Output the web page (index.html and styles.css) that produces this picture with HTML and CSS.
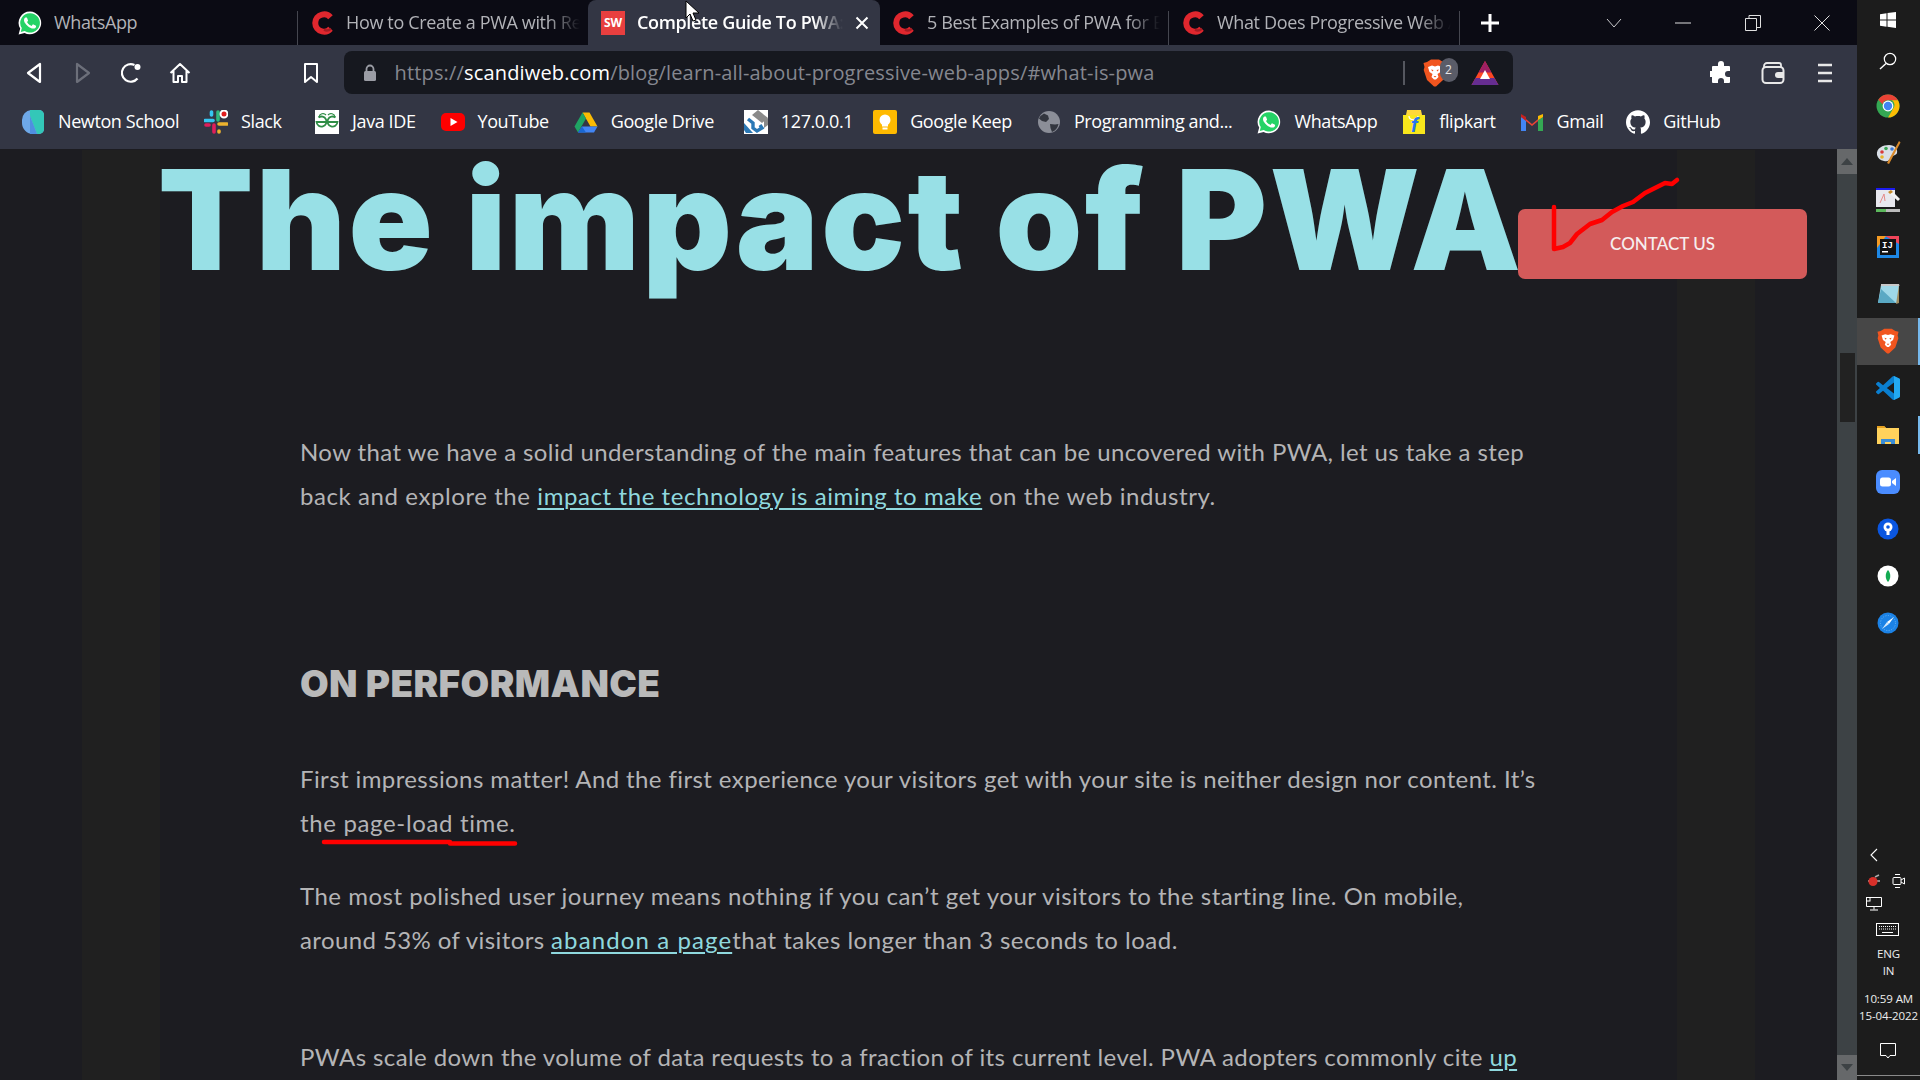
FILE: index.html
```html
<!DOCTYPE html>
<html lang="en">
<head>
<meta charset="utf-8">
<title>Complete Guide To PWA</title>
<link rel="stylesheet" href="styles.css">
</head>
<body>
<svg class="defs" width="0" height="0">
  <symbol id="wa" viewBox="0 0 24 24"><path fill="#fff" d="M12 .6A11.3 11.3 0 0 0 2.2 17.6L.6 23.4l6-1.5A11.3 11.3 0 1 0 12 .6z"/><path fill="#25d366" d="M12 2.2a9.7 9.7 0 0 0-8.2 14.9l-1 3.8 3.9-1A9.7 9.7 0 1 0 12 2.2z"/><path fill="#fff" d="M17.472 14.382c-.297-.149-1.758-.867-2.03-.967-.273-.099-.471-.148-.67.15-.197.297-.767.966-.94 1.164-.173.199-.347.223-.644.075-.297-.15-1.255-.463-2.39-1.475-.883-.788-1.48-1.761-1.653-2.059-.173-.297-.018-.458.13-.606.134-.133.298-.347.446-.52.149-.174.198-.298.298-.497.099-.198.05-.371-.025-.52-.075-.149-.669-1.612-.916-2.207-.242-.579-.487-.5-.669-.51-.173-.008-.371-.01-.57-.01-.198 0-.52.074-.792.372-.272.297-1.04 1.016-1.04 2.479 0 1.462 1.065 2.875 1.213 3.074.149.198 2.096 3.2 5.077 4.487.709.306 1.262.489 1.694.625.712.227 1.36.195 1.871.118.571-.085 1.758-.719 2.006-1.413.248-.694.248-1.289.173-1.413-.074-.124-.272-.198-.57-.347z"/></symbol>
  <symbol id="clogo" viewBox="0 0 24 24"><path fill="none" stroke="#e0272e" stroke-width="6" d="M20.5 6.2A8.4 8.4 0 0 0 12 3.6a8.6 8.6 0 0 0 0 16.8 8.4 8.4 0 0 0 8.5-2.6"/><path fill="none" stroke="#a51c24" stroke-width="2.4" d="M21 17.6a6 6 0 0 1-7 1.2"/></symbol>
  <symbol id="chrome" viewBox="0 0 24 24"><circle cx="12" cy="12" r="11.5" fill="#34a853"/><path fill="#ea4335" d="M12 .5a11.5 11.5 0 0 1 10 5.8H12a5.7 5.7 0 0 0-5.5 4L2.3 5.800A11.500 11.500 0 0 1 12 .5z"/><path fill="#fbbc04" d="M22 6.300a11.500 11.500 0 0 1-9.900 17.200l4.800-8.500a5.700 5.700 0 0 0-.900-8.700z"/><circle cx="12" cy="12" r="5.400" fill="#fff"/><circle cx="12" cy="12" r="4.200" fill="#4285f4"/></symbol>
  <symbol id="brave" viewBox="0 0 24 28"><path d="M4 3l4-2.500h8L20 3l3.500 1-1 4 .8 3-3.300 10-7 6.500h-2L4 21 .7 11l.8-3-1-4z" fill="#f1551f"/><path d="M5 8l4-1.500 3 1 3-1L19 8l-1.500 5-3 2 1 3-2.500 2.500h-2L8.500 18l1-3-3-2z" fill="#fff"/><path d="M8 10.500l2.500.5-1 1.500zM16 10.500l-2.500.5 1 1.500zM10.500 17h3l-1.500 1.500z" fill="#f1551f"/></symbol>
</svg>
<div class="desktop">
  <div class="browser">
    <div class="tabstrip">
      <div class="tab tab-wa"><svg width="24" height="24"><use href="#wa"/></svg><span class="tab-title">WhatsApp</span></div>
      <i class="sep"></i>
      <div class="tab tab-b"><svg width="24" height="24"><use href="#clogo"/></svg><span class="tab-title fade">How to Create a PWA with React</span></div>
      <div class="tab tab-active"><span class="sw">SW</span><span class="tab-title fade">Complete Guide To PWA: What</span><svg class="tab-x" width="14" height="14" viewBox="0 0 14 14"><path d="M1.500 1.500l11 11M12.500 1.500l-11 11" stroke="#fff" stroke-width="2"/></svg></div>
      <div class="tab tab-c"><svg width="24" height="24"><use href="#clogo"/></svg><span class="tab-title fade">5 Best Examples of PWA for E-commerce</span></div>
      <i class="sep"></i>
      <div class="tab tab-d"><svg width="24" height="24"><use href="#clogo"/></svg><span class="tab-title fade">What Does Progressive Web App</span></div>
      <i class="sep"></i>
      <div class="newtab"><svg width="20" height="20" viewBox="0 0 20 20"><path d="M10 1v18M1 10h18" stroke="#fff" stroke-width="3"/></svg></div>
      <div class="winctl winctl-first"><svg width="16" height="10" viewBox="0 0 16 10"><path d="M1 1l7 8 7-8" fill="none" stroke="#c9c9cc" stroke-width="1"/></svg></div>
      <div class="winctl"><svg width="16" height="2" viewBox="0 0 16 2"><path d="M0 1h16" stroke="#e0e0e0" stroke-width="1"/></svg></div>
      <div class="winctl"><svg width="16" height="16" viewBox="0 0 16 16"><path d="M.5 3.500h11v12H.5zM4 3.500V.5h11.500v12h-4" fill="none" stroke="#e0e0e0" stroke-width="1"/></svg></div>
      <div class="winctl"><svg width="16" height="16" viewBox="0 0 16 16"><path d="M.5.5l15 15M15.500.5l-15 15" stroke="#e0e0e0" stroke-width="1"/></svg></div>
    </div>
    <div class="toolbar">
      <div class="navbtn"><svg width="18" height="22" viewBox="0 0 18 22"><path d="M15 2v18L3 11z" fill="none" stroke="#fff" stroke-width="2.200" stroke-linejoin="round"/></svg></div>
      <div class="navbtn"><svg width="18" height="22" viewBox="0 0 18 22"><path d="M3 2v18l12-9z" fill="none" stroke="#6c6f7a" stroke-width="2.200" stroke-linejoin="round"/></svg></div>
      <div class="navbtn"><svg width="22" height="22" viewBox="0 0 22 22"><path d="M17.500 16.500A8.800 8.800 0 1 1 14.500 3" fill="none" stroke="#fff" stroke-width="2.200"/><circle cx="17.500" cy="5" r="3" fill="#fff"/></svg></div>
      <div class="navbtn"><svg width="22" height="22" viewBox="0 0 22 22"><path d="M1.500 11L11 2l9.500 9M4.500 9v11h4.500v-6h4v6h4.500V9" fill="none" stroke="#fff" stroke-width="2" stroke-linejoin="round"/></svg></div>
      <div class="navbtn navbtn-mark"><svg width="16" height="22" viewBox="0 0 16 22"><path d="M2 2h12v18l-6-5-6 5z" fill="none" stroke="#fff" stroke-width="2" stroke-linejoin="round"/></svg></div>
      <div class="omnibox">
        <svg class="lock" width="14" height="18" viewBox="0 0 14 18"><path d="M3.500 8V5a3.500 3.500 0 0 1 7 0v3" fill="none" stroke="#9b9da5" stroke-width="1.800"/><rect x="1" y="7" width="12" height="10" rx="1.500" fill="#9b9da5"/></svg>
        <span class="url"><span class="url-dim">https://</span><span class="url-host">scandiweb.com</span><span class="url-dim">/blog/learn-all-about-progressive-web-apps/#what-is-pwa</span></span>
        <i class="omni-div"></i>
        <div class="shield">
          <svg width="24" height="28"><use href="#brave"/></svg>
          <span class="shield-badge">2</span>
        </div>
        <svg class="bat" width="28" height="26" viewBox="0 0 28 26"><path d="M14 1L.5 25h27z" fill="#ff4724"/><path d="M14 1L7.500 12.500h13z" fill="#9e1f63"/><path d="M.5 25l4-7h19l4 7z" fill="#662d91"/><path d="M14 10l-5 9h10z" fill="#fff"/></svg>
      </div>
      <div class="toolbtn toolbtn-first"><svg width="22" height="24" viewBox="0 0 22 24"><path d="M8 3a3 3 0 0 1 6 0v2h5a1 1 0 0 1 1 1v4h-2a3 3 0 0 0 0 6h2v5a1 1 0 0 1-1 1h-5v-2a3 3 0 0 0-6 0v2H3a1 1 0 0 1-1-1v-5H.5a3 3 0 0 1 0-6H2V6a1 1 0 0 1 1-1h5z" fill="#fff"/></svg></div>
      <div class="toolbtn"><svg width="24" height="24" viewBox="0 0 24 24"><path d="M3 7V5a3 3 0 0 1 3-3h12a2 2 0 0 1 2 2v3" fill="none" stroke="#e8e8e8" stroke-width="1.800"/><rect x="1.500" y="6" width="21" height="16" rx="3.500" fill="none" stroke="#e8e8e8" stroke-width="2"/><path d="M23 11h-6a2.800 2.800 0 0 0 0 6h6z" fill="#e8e8e8"/></svg></div>
      <div class="toolbtn"><svg width="20" height="22" viewBox="0 0 20 22"><path d="M3 3h14M3 11h14M3 19h14" stroke="#e8e8e8" stroke-width="2.400"/></svg></div>
    </div>
    <div class="bookmarks">
      <div class="bm bm-1"><svg width="24" height="24" viewBox="0 0 24 24"><path d="M10 0h8a5 5 0 0 1 5 5v14a5 5 0 0 1-5 5h-6A11 11 0 0 1 1 13v-3A10 10 0 0 1 10 0z" fill="#6ea8e8"/><path d="M9 0h9a5 5 0 0 1 5 5v14a5 5 0 0 1-5 5h-2L9 6z" fill="#33c7b8"/><path d="M9 24V6l7 18z" fill="#4f8fe0"/></svg><span>Newton School</span></div>
      <div class="bm bm-2"><svg width="24" height="24" viewBox="0 0 24 24"><path d="M1 10.500h8" stroke="#36c5f0" stroke-width="3.600" stroke-linecap="round"/><path d="M7.500 2v3" stroke="#36c5f0" stroke-width="3.600" stroke-linecap="round"/><path d="M14 2v8" stroke="#2eb67d" stroke-width="3.600" stroke-linecap="round"/><path d="M15 14h8" stroke="#ecb22e" stroke-width="3.600" stroke-linecap="round"/><path d="M15 21v1" stroke="#ecb22e" stroke-width="3.600" stroke-linecap="round"/><path d="M10 15v7" stroke="#e01e5a" stroke-width="3.600" stroke-linecap="round"/><path d="M2 15h3" stroke="#e01e5a" stroke-width="3.600" stroke-linecap="round"/><circle cx="20" cy="4" r="3.500" fill="#e01e1e" stroke="#fff" stroke-width="2"/></svg><span>Slack</span></div>
      <div class="bm bm-3"><svg width="24" height="24" viewBox="0 0 24 24"><rect width="24" height="24" fill="#fff"/><path d="M11.500 12H1.500a5 5 0 1 0 2-4.500M12.500 12h10a5 5 0 1 1-2-4.500" fill="none" stroke="#2f8d46" stroke-width="1.800"/><path d="M11 5a4 4 0 0 0-7 2M13 5a4 4 0 0 1 7 2" fill="none" stroke="#2f8d46" stroke-width="1.200"/></svg><span>Java IDE</span></div>
      <div class="bm bm-4"><svg width="24" height="24" viewBox="0 0 24 24"><rect y="3" width="24" height="18" rx="5" fill="#f00"/><path d="M9.500 8v8l7-4z" fill="#fff"/></svg><span>YouTube</span></div>
      <div class="bm bm-5"><svg width="24" height="24" viewBox="0 0 24 24"><path d="M8.500 2.500h7l8 14h-7z" fill="#fbbc04"/><path d="M8.500 2.500L.5 16.500l3.500 6 8-14z" fill="#1fa463"/><path d="M4 22.500h16l3.500-6h-15.500z" fill="#4285f4"/><path d="M8 16.500L4 22.500h8z" fill="#1967d2"/></svg><span>Google Drive</span></div>
      <div class="bm bm-6"><svg width="24" height="24" viewBox="0 0 24 24"><rect width="24" height="24" fill="#fff"/><path d="M14 0l10 8-6 5-10-8z" fill="#8a8a8a"/><path d="M4 9l5 4v5l4 3 5-3-2-3" fill="none" stroke="#2b78b5" stroke-width="3.400"/><path d="M0 13l9 10H2l-2-3z" fill="#2b78b5"/><path d="M20 10l4-2v7l-4 3z" fill="#8a8a8a"/></svg><span>127.0.0.1</span></div>
      <div class="bm bm-7"><svg width="24" height="24" viewBox="0 0 24 24"><rect width="24" height="24" rx="2" fill="#ffba00"/><circle cx="12" cy="10" r="5.500" fill="#fff"/><rect x="9" y="14" width="6" height="2.500" fill="#fff"/><rect x="9.500" y="17.500" width="5" height="2" fill="#fff"/></svg><span>Google Keep</span></div>
      <div class="bm bm-8"><svg width="24" height="24" viewBox="0 0 24 24"><circle cx="12" cy="12" r="11" fill="#8b8e98"/><path d="M7 3.500l4 2 1 3.500-3 3-4-1-3-2.500A11 11 0 0 1 7 3.500zM13 14l5 .5 3.500-.5a11 11 0 0 1-6.500 8l-1.500-4z" fill="#33363f"/></svg><span>Programming and...</span></div>
      <div class="bm bm-9"><svg width="24" height="24"><use href="#wa"/></svg><span>WhatsApp</span></div>
      <div class="bm bm-10"><svg width="24" height="24" viewBox="0 0 24 24"><path d="M1 5h22v19H1z" fill="#f8e71c"/><path d="M4 5L5 0h14l1 5z" fill="#ffd83a"/><path d="M7 6c0 5 9 5 9 0" fill="none" stroke="#fff" stroke-width="1.200"/><text class="flip-f" x="9" y="22">f</text></svg><span>flipkart</span></div>
      <div class="bm bm-11"><svg width="24" height="24" viewBox="0 0 24 24"><path d="M1 5l11 9 11-9v2L12 16 1 7z" fill="#ea4335"/><path d="M1 7v14h5V10z" fill="#4285f4"/><path d="M23 7v14h-5V10z" fill="#34a853"/><path d="M18 10l5-3V4l-5 2z" fill="#fbbc04"/><path d="M1 4l5 3v4L1 7z" fill="#c5221f"/></svg><span>Gmail</span></div>
      <div class="bm bm-12"><svg width="24" height="24" viewBox="0 0 24 24"><path fill="#fff" d="M12 .297c-6.630 0-12 5.373-12 12 0 5.303 3.438 9.800 8.205 11.385.6.113.82-.258.82-.577 0-.285-.01-1.040-.015-2.040-3.338.724-4.042-1.610-4.042-1.610C4.422 18.070 3.633 17.700 3.633 17.700c-1.087-.744.084-.729.084-.729 1.205.084 1.838 1.236 1.838 1.236 1.070 1.835 2.809 1.305 3.495.998.108-.776.417-1.305.76-1.605-2.665-.3-5.466-1.332-5.466-5.930 0-1.310.465-2.380 1.235-3.220-.135-.303-.54-1.523.105-3.176 0 0 1.005-.322 3.300 1.230.96-.267 1.980-.399 3-.405 1.020.006 2.040.138 3 .405 2.280-1.552 3.285-1.230 3.285-1.230.645 1.653.24 2.873.12 3.176.765.84 1.230 1.910 1.230 3.220 0 4.610-2.805 5.625-5.475 5.920.42.36.81 1.096.81 2.220 0 1.606-.015 2.896-.015 3.286 0 .315.21.69.825.57C20.565 22.092 24 17.592 24 12.297c0-6.627-5.373-12-12-12"/></svg><span>GitHub</span></div>
    </div>
    <div class="viewport">
      <div class="page">
        <div class="band">
          <article class="article">
            <h1 class="hero">The impact of PWA</h1>
            <p class="copy copy-first">Now that we have a solid understanding of the main features that can be uncovered with PWA, let us take a step<br><span class="ls-a">back and explore the <a class="lnk">impact the technology is aiming to make</a> on the web industry.</span></p>
            <h2 class="sub">ON PERFORMANCE</h2>
            <p class="copy copy-a">First impressions matter! And the first experience your visitors get with your site is neither design nor content. It’s<br><span class="ls-b">the page-load time.</span></p>
            <p class="copy copy-b"><span class="ls-c">The most polished user journey means nothing if you can’t get your visitors to the starting line. On mobile,</span><br>around 53% of visitors <a class="lnk lnk-wide">abandon a page</a><span class="ls-c">that takes longer than 3 seconds to load.</span></p>
            <p class="copy copy-c">PWAs scale down the volume of data requests to a fraction of its current level. PWA adopters commonly cite <a class="lnk">up</a></p>
          </article>
        </div>
        <a class="contact">CONTACT US</a>
      </div>
      <div class="scrollbar">
        <div class="sb-btn"><i class="arrow-up"></i></div>
        <div class="sb-track"><div class="sb-thumb"></div></div>
        <div class="sb-btn"><i class="arrow-down"></i></div>
      </div>
    </div>
  </div>
  <aside class="taskbar">
    <div class="tb-icon tb-win"><svg width="16" height="16" viewBox="0 0 16 16"><path d="M0 2.300l6.500-1v6.200H0zM7.500 1.100L16 0v7.500H7.500zM0 8.500h6.500v6.200l-6.500-1zM7.500 8.500H16V16l-8.500-1.200z" fill="#fff"/></svg></div>
    <div class="tb-icon tb-search"><svg width="18" height="18" viewBox="0 0 18 18"><circle cx="11" cy="7" r="5.700" fill="none" stroke="#fff" stroke-width="1.200"/><path d="M7 11.500L1 17" stroke="#fff" stroke-width="1.400"/></svg></div>
    <div class="tb-icon"><svg width="24" height="24"><use href="#chrome"/></svg></div>
    <div class="tb-icon"><svg width="26" height="26" viewBox="0 0 26 26"><path d="M2 15C1 8 8 5 14 5c6 0 9 4 8 8-1 3-5 2-6 4-1 3-3 5-7 4-4-.5-6-3-7-6z" fill="#d9dfe6"/><circle cx="7" cy="12" r="1.800" fill="#d83b3b"/><circle cx="11" cy="8.500" r="1.800" fill="#3aa655"/><circle cx="17" cy="9" r="1.800" fill="#3b79d8"/><circle cx="7" cy="17" r="1.800" fill="#e8b32c"/><path d="M24 1l1.500 1.500L14 24l-2-1z" fill="#d98a2b"/></svg></div>
    <div class="tb-icon"><svg width="26" height="26" viewBox="0 0 26 26"><rect x="1" y="1" width="19" height="2" fill="#1c1cf0"/><rect x="1" y="3" width="19" height="17" fill="#e8e8ee"/><path d="M5 16l4-9 1 7" fill="none" stroke="#e58a8a" stroke-width="1"/><path d="M13 5l3-2 9 9-2 2z" fill="#f4f4f4"/><path d="M13 5l3-2 2 2-3 2z" fill="#c58a2a"/><rect x="1" y="22" width="10" height="3" fill="#5cb85c"/><rect x="11" y="22" width="14" height="3" fill="#bbb"/></svg></div>
    <div class="tb-icon"><svg width="22" height="22" viewBox="0 0 22 22"><rect width="22" height="22" fill="#1e88e5"/><path d="M0 0h22v8L8 0z" fill="#f0455a"/><path d="M0 0h9L0 12z" fill="#f59b23"/><rect x="3" y="3" width="16" height="16" fill="#111"/><rect x="5" y="15" width="6" height="1.500" fill="#fff"/><text class="ij" x="5" y="12">IJ</text></svg></div>
    <div class="tb-icon"><svg width="24" height="24" viewBox="0 0 24 24"><path d="M5 3h18v18H2z" fill="#9fd8e8"/><path d="M2 21L5 7l15 14z" fill="#5aa9c4"/><path d="M5 2h18l.5 2H5z" fill="#c8c8c8"/><path d="M23 3v18l-3 1z" fill="#a08c60"/></svg></div>
    <div class="tb-icon tb-active"><svg width="22" height="26"><use href="#brave"/></svg></div>
    <div class="tb-icon"><svg width="24" height="24" viewBox="0 0 24 24"><path fill="#0a7fd0" d="M23.150 2.587L18.210.21a1.494 1.494 0 0 0-1.705.29l-9.460 8.630-4.120-3.128a.999.999 0 0 0-1.276.057L.327 7.261A1 1 0 0 0 .326 8.740L3.899 12 .326 15.260a1 1 0 0 0 .001 1.479L1.650 17.940a.999.999 0 0 0 1.276.057l4.120-3.128 9.460 8.630a1.492 1.492 0 0 0 1.704.29l4.942-2.377A1.500 1.500 0 0 0 24 20.060V3.939a1.500 1.500 0 0 0-.85-1.352zm-5.146 14.861L10.826 12l7.178-5.448v10.896z"/><path fill="#23a9f2" d="M18 .1l5.150 2.487A1.500 1.500 0 0 1 24 3.939v16.121a1.500 1.500 0 0 1-.85 1.352L18 23.900z"/></svg></div>
    <div class="tb-icon tb-open"><svg width="22" height="18" viewBox="0 0 22 18"><path d="M0 0h7l2 2h13v16H0z" fill="#ffd25c"/><path d="M0 0h7l2 2H0z" fill="#e6a020"/><path d="M4 18v-5h14v5h-4v-2H8v2z" fill="#3b8dd6"/></svg></div>
    <div class="tb-icon"><svg width="24" height="24" viewBox="0 0 24 24"><rect width="24" height="24" rx="6" fill="#4a8cff"/><rect x="4" y="7.500" width="11" height="9" rx="2.500" fill="#fff"/><path d="M16 11l4-3v8l-4-3z" fill="#fff"/></svg></div>
    <div class="tb-icon"><svg width="22" height="22" viewBox="0 0 22 22"><circle cx="11" cy="11" r="10.500" fill="#0a56e0"/><circle cx="11" cy="9" r="4.500" fill="#fff"/><path d="M9.500 10h3v7h-3z" fill="#fff"/><circle cx="11" cy="9" r="1.800" fill="#0a56e0"/></svg></div>
    <div class="tb-icon"><svg width="22" height="22" viewBox="0 0 22 22"><circle cx="11" cy="11" r="10.500" fill="#fff"/><path d="M11 5c3 3 3 9 0 12-3-3-3-9 0-12z" fill="#13aa52"/></svg></div>
    <div class="tb-icon"><svg width="22" height="22" viewBox="0 0 22 22"><circle cx="11" cy="11" r="10.500" fill="#1b82e6"/><circle cx="11" cy="11" r="7.500" fill="none" stroke="#69b2f2" stroke-width="1" stroke-dasharray="1 1.500"/><path d="M17 5l-5 7-2-2z" fill="#fff"/><path d="M5 17l7-5-2-2z" fill="#d6e9fb"/></svg></div>
    <div class="tray">
      <div class="tray-row tray-chev"><svg width="8" height="14" viewBox="0 0 8 14"><path d="M7 1L1 7l6 6" fill="none" stroke="#fff" stroke-width="1.100"/></svg></div>
      <div class="tray-row tray-pair"><svg width="16" height="14" viewBox="0 0 16 14"><path d="M2 7h12M9 3l4-2" stroke="#aaa" stroke-width="1.500"/><circle cx="7" cy="7.500" r="4.500" fill="#d8302a"/></svg><svg width="13" height="16" viewBox="0 0 13 16"><rect x="1" y="4.500" width="8" height="7" rx="1" fill="none" stroke="#fff" stroke-width="1"/><path d="M9 7l3.500-2v6L9 9M3 1.500h5M3 14.500h5" fill="none" stroke="#fff" stroke-width="1"/></svg></div>
      <div class="tray-row tray-net"><svg width="16" height="14" viewBox="0 0 16 14"><path d="M3.500.5h12v9h-15V4M8 9.500v3M4 13h8" fill="none" stroke="#fff" stroke-width="1"/><rect x=".5" y=".5" width="3.500" height="3.500" fill="none" stroke="#fff" stroke-width="1"/></svg></div>
      <div class="tray-row tray-kb"><svg width="23" height="13" viewBox="0 0 23 13"><rect x=".5" y=".5" width="22" height="12" fill="none" stroke="#fff" stroke-width="1"/><path d="M3 3.500h17M3 6h17" stroke="#fff" stroke-dasharray="1 1" stroke-width="1"/><path d="M6 9.500h11" stroke="#fff" stroke-width="1"/></svg></div>
      <div class="tray-text tray-eng">ENG</div>
      <div class="tray-text">IN</div>
      <div class="tray-text tray-time">10:59 AM</div>
      <div class="tray-text">15-04-2022</div>
      <div class="tray-row tray-note"><svg width="16" height="16" viewBox="0 0 16 16"><path d="M.5.5h15v12h-5.500L8 15l-2-2.500H.5z" fill="none" stroke="#fff" stroke-width="1"/></svg></div>
    </div>
    <i class="tb-line"></i>
  </aside>
  <svg class="ink" width="1920" height="1080" viewBox="0 0 1920 1080">
    <path class="ink-line" d="M1554 207V249L1563 247 1570 243 1577 234 1590 224 1602 220 1612 212 1623 206 1633 202 1645 193 1665 183 1672 184 1677 180"/>
    <path class="ink-line" d="M324 842H450M450 843.500H515"/>
    <path d="M686 1v17l4-4 3 7 3-1-3-7h6z" fill="#fff" stroke="#000" stroke-width="1"/>
  </svg>
</div>
</body>
</html>
```
FILE: styles.css
```css
* { box-sizing: border-box; }
html, body { margin: 0; height: 100%; overflow: hidden; background: #1c1c21; }
.defs { display: block; height: 0; }
i { display: block; }
svg { display: block; flex: none; }

.desktop { display: flex; width: 1920px; height: 1080px; position: relative; font-family: "Open Sans", "Noto Sans", sans-serif; }
.browser { width: 1857px; display: flex; flex-direction: column; }

/* tab strip */
.tabstrip { height: 45px; display: flex; align-items: stretch; background: #0b0b14; flex: none; }
.tab { display: flex; align-items: center; gap: 12px; height: 45px; color: #b2b3b8; font-size: 18px; letter-spacing: -.35px; overflow: hidden; }
.tab-wa { width: 297px; padding-left: 18px; }
.tab-b { width: 290px; padding-left: 12px; padding-right: 8px; }
.tab-active { width: 292px; padding-left: 13px; padding-right: 11px; background: #333644; color: #fff; border-radius: 8px 8px 0 0; font-weight: 600; }
.tab-c { width: 288px; padding-left: 11px; padding-right: 8px; }
.tab-d { width: 290px; padding-left: 12px; padding-right: 8px; }
.tab-title { white-space: nowrap; overflow: hidden; flex: 1; padding-bottom: 2px; }
.fade { -webkit-mask-image: linear-gradient(90deg, #000 86%, transparent 100%); mask-image: linear-gradient(90deg, #000 86%, transparent 100%); }
.sw { width: 24px; height: 24px; flex: none; background: #e83f3f; color: #fff; font-size: 12px; font-weight: 700; letter-spacing: 0; display: flex; align-items: center; justify-content: center; }
.sep { width: 1px; height: 34px; align-self: flex-end; background: #45464f; flex: none; }
.newtab { width: 60px; display: flex; align-items: center; justify-content: center; }
.winctl { width: 69.500px; display: flex; align-items: center; justify-content: center; }
.winctl-first { margin-left: auto; }

/* toolbar */
.toolbar { height: 50px; flex: none; background: #333644; display: flex; align-items: flex-start; padding: 6px 6px 0 10px; }
.navbtn { width: 48.500px; height: 43px; display: flex; align-items: center; justify-content: center; }
.navbtn-mark { margin-left: 82.500px; width: 48px; }
.omnibox { width: 1169px; margin-left: 9px; height: 43px; background: #16181f; border-radius: 8px; display: flex; align-items: center; padding: 0 14px 0 19px; }
.url { margin-left: 18px; font-size: 20px; letter-spacing: .16px; white-space: nowrap; color: #85878f; }
.url-host { color: #fff; }
.omni-div { margin-left: auto; width: 2px; height: 24px; background: #55575f; }
.shield { margin-left: 18px; position: relative; width: 24px; height: 28px; }
.shield-badge { position: absolute; left: 17px; top: -1px; width: 18px; height: 24px; border-radius: 9px; background: #5a5c68; color: #e6e6e6; font-size: 12px; display: flex; align-items: center; justify-content: center; }
.bat { margin-left: 24px; }
.toolbtn { width: 52px; height: 43px; display: flex; align-items: center; justify-content: center; }
.toolbtn-first { margin-left: auto; }

/* bookmarks */
.bookmarks { height: 54px; flex: none; background: #333644; display: flex; align-items: center; padding: 0 0 0 21px; }
.bm { display: flex; align-items: center; gap: 13px; color: #fff; font-size: 18px; letter-spacing: -.4px; line-height: 24px; white-space: nowrap; margin-right: 25px; }
.bm span { margin-top: -2px; }
.bm-2 { margin-right: 33.500px; }
.bm-5 { margin-right: 30px; }
.bm-6 { margin-right: 20px; }
.bm-10 { margin-right: 24px; }
.bm-11 { margin-right: 23px; }

/* page */
.viewport { flex: 1; display: flex; min-height: 0; }
.page { flex: 1; position: relative; overflow: hidden; background: #1c1c21; }
.band { margin: 0 82px; height: 100%; background: #202020; }
.article { margin: 0 78px; height: 100%; background: #1c1c21; font-family: Lato, sans-serif; }
.hero { margin: 1px 0 0 -2px; font-family: Inter, Lato, sans-serif; font-size: 139px; letter-spacing: 2.400px; line-height: 140px; font-weight: 900; color: #98e0e6; white-space: nowrap; }
.copy { margin: 0 0 0 140px; font-size: 24px; letter-spacing: .4px; line-height: 44px; color: #b4b4b6; white-space: nowrap; }
.copy-first { margin-top: 140px; }
.copy-a { margin-top: 51px; }
.copy-b { margin-top: 29px; }
.copy-c { margin-top: 73px; }
.ls-a { letter-spacing: .58px; }
.ls-b { letter-spacing: .65px; }
.ls-c { letter-spacing: .5px; }
.lnk { color: #8fd8de; text-decoration: underline; text-underline-offset: 3px; text-decoration-thickness: 2px; }
.lnk-wide { letter-spacing: 1.100px; }
.sub { margin: 144px 0 0 140px; font-family: Inter, Lato, sans-serif; font-size: 37px; letter-spacing: .4px; line-height: 44px; font-weight: 900; color: #b9b9b9; white-space: nowrap; }
.contact { position: absolute; left: 1518px; top: 60px; width: 289px; height: 70px; padding-bottom: 2px; border-radius: 7px; background: #d35a5a; color: #f6eeee; font-family: Lato, sans-serif; font-size: 17px; font-weight: 500; display: flex; align-items: center; justify-content: center; }

/* scrollbar */
.scrollbar { width: 20px; flex: none; background: #3d4245; display: flex; flex-direction: column; }
.sb-btn { height: 25px; flex: none; background: #66686a; display: flex; align-items: center; justify-content: center; }
.sb-track { flex: 1; padding: 179px 2px 0 3px; }
.sb-thumb { height: 69px; background: #222222; }
.arrow-up { border: 6px solid transparent; border-top: 0; border-bottom: 7px solid #3d4245; }
.arrow-down { border: 6px solid transparent; border-bottom: 0; border-top: 7px solid #3d4245; }

/* taskbar */
.taskbar { width: 63px; flex: none; background: #1c1c1c; display: flex; flex-direction: column; align-items: stretch; color: #eee; position: relative; }
.tb-icon { height: 47px; display: flex; align-items: center; justify-content: center; flex: none; padding-right: 2px; position: relative; }
.tb-win { height: 40px; }
.tb-search { height: 42.500px; }
.tb-active { background: #474747; }
.tb-active::after, .tb-open::after { content: ""; position: absolute; right: 0; width: 2px; background: #76b9ed; }
.tb-active::after { top: 0; bottom: 0; }
.tb-open::after { top: 4px; height: 38px; }
.tray { margin-top: auto; padding-bottom: 15px; font-size: 11.500px; letter-spacing: -.1px; text-align: center; }
.tray-row { display: flex; align-items: center; justify-content: center; }
.tray-chev { height: 23px; margin-bottom: 3px; justify-content: flex-start; padding-left: 13px; }
.tray-pair { height: 24px; gap: 10px; padding-right: 6px; }
.tray-net { height: 22px; justify-content: flex-start; padding-left: 9px; }
.tray-kb { height: 29px; padding-right: 2px; }
.tray-text { height: 17px; line-height: 17px; white-space: nowrap; }
.tray-eng { margin-top: 1px; }
.tray-time { margin-top: 11px; }
.tray-note { height: 28px; margin-top: 13px; padding-right: 2px; }
.tb-line { position: absolute; left: 0; right: 0; bottom: 4px; height: 1px; background: #8a8a8a; }

.flip-f { font: italic 700 20px Roboto, sans-serif; fill: #2874f0; }
.ij { font: 700 9px "Liberation Mono", monospace; fill: #fff; }

/* overlay ink and pointer */
.ink { position: absolute; left: 0; top: 0; pointer-events: none; }
.ink-line { fill: none; stroke: #f00; stroke-width: 4.500; stroke-linecap: round; stroke-linejoin: round; }
```
